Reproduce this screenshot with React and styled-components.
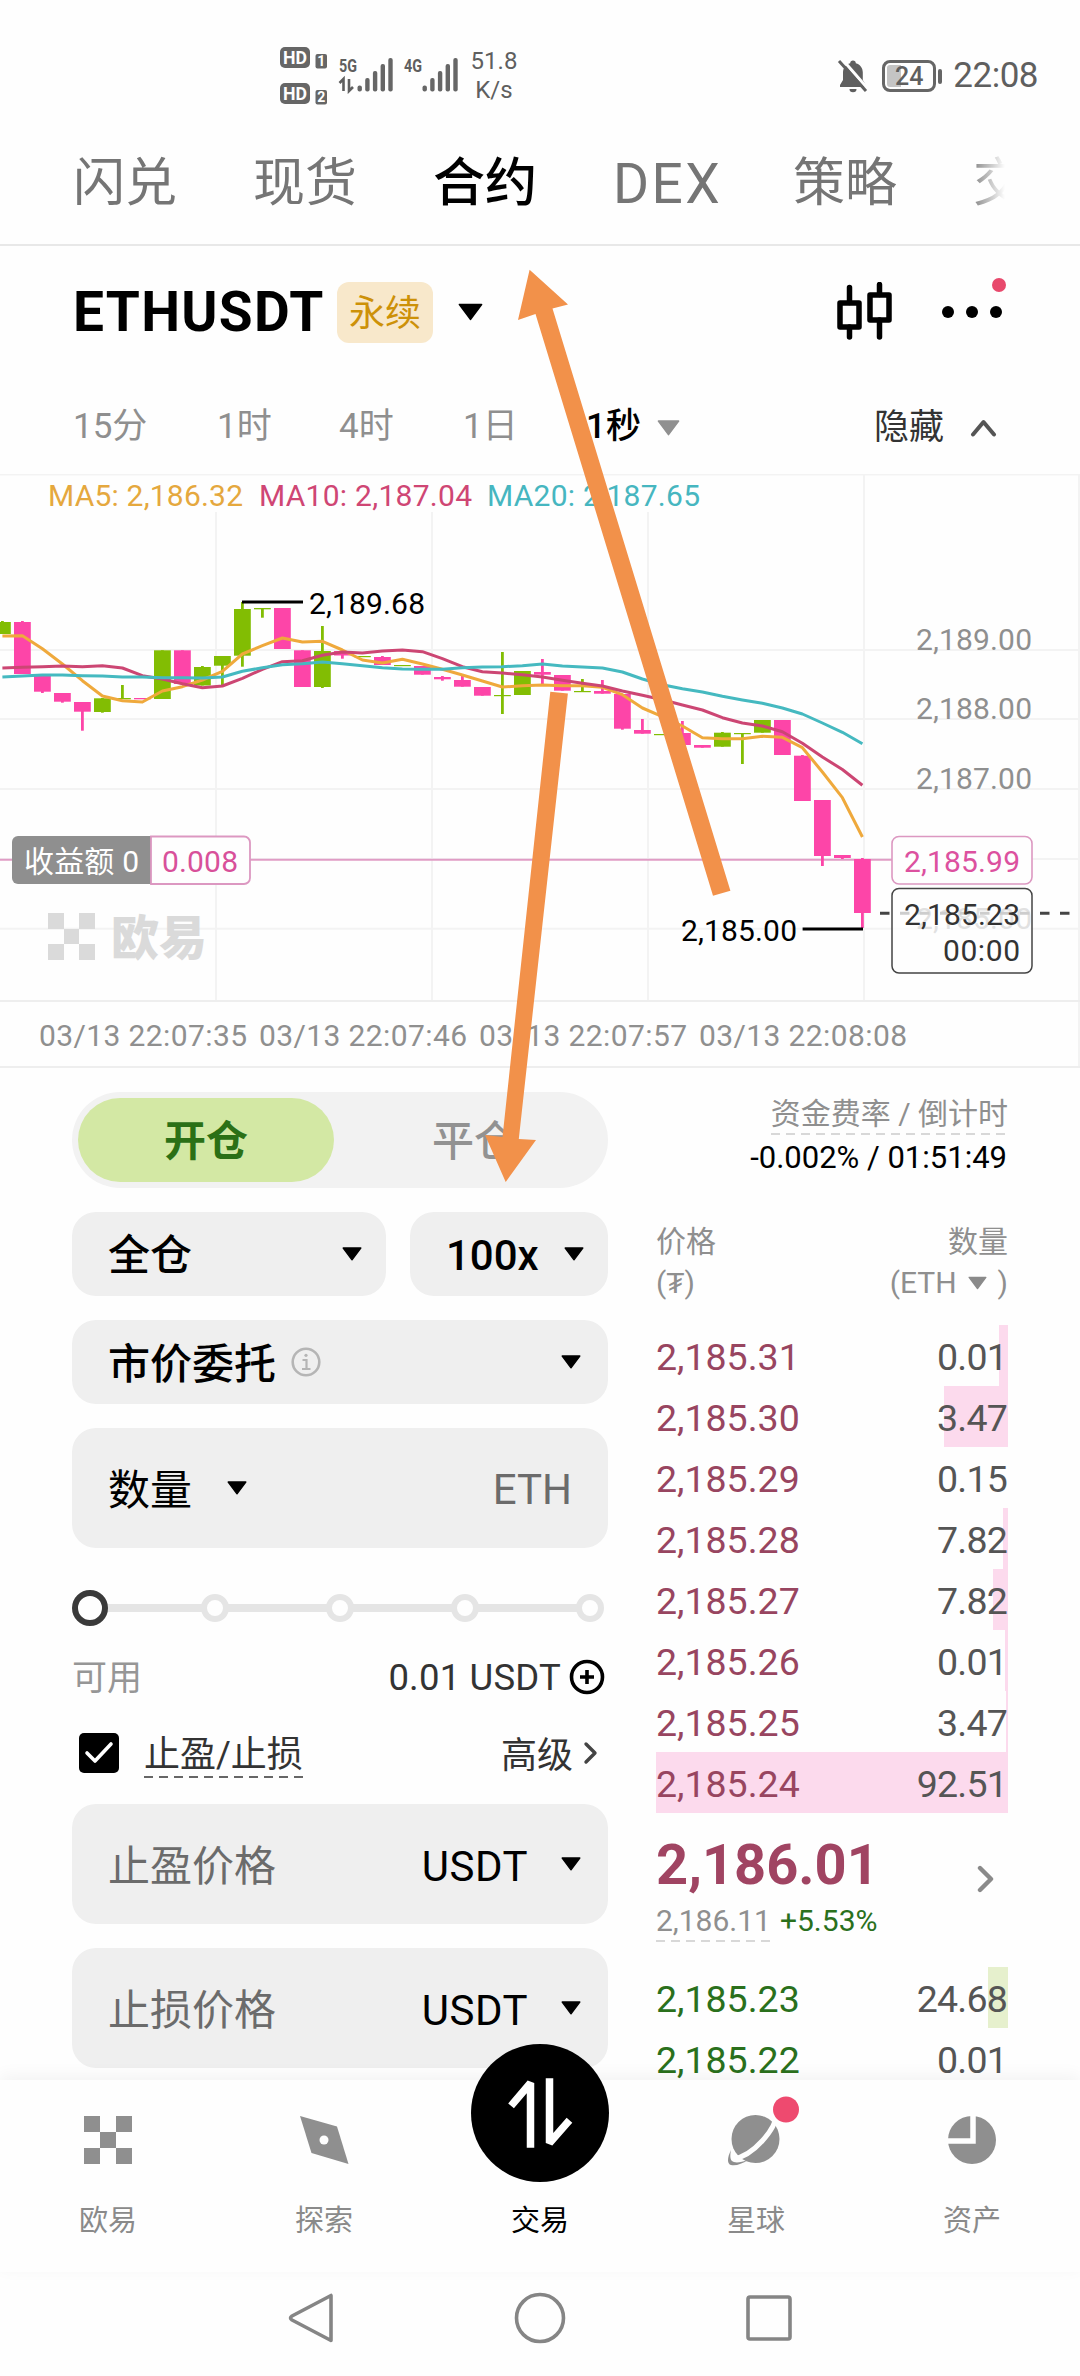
import React from "react";
import styled, { createGlobalStyle } from "styled-components";

const GREY = "#8f8f8f";
const PINK = "#fd45a8";
const LIME = "#82bd03";

const Global = createGlobalStyle`
  * { box-sizing: border-box; }
  body { margin: 0; background: #fefefe; }
`;

const Screen = styled.div`
  position: relative;
  display: flex;
  flex-direction: column;
  width: 1080px;
  height: 2376px;
  overflow: hidden;
  background: #fefefe;
  color: #000;
  font-family: Roboto, "Noto Sans CJK SC", sans-serif;
  svg { display: block; flex: none; }
`;

/* ---------- status bar ---------- */
const StatusBar = styled.div`
  display: flex;
  justify-content: space-between;
  height: 114px;
  padding: 46px 42px 0 279px;
  color: #5f5f5f;
`;
const StatusGroup = styled.div`
  display: flex;
  align-items: ${(p) => p.$align || "flex-start"};
  height: 60px;
`;
const Speed = styled.div`
  width: 60px;
  font-size: 24px;
  line-height: 29px;
  text-align: center;
  margin: 1px 0 0 5px;
`;
const Battery = styled.div`
  position: relative;
  width: 54px;
  height: 32px;
  margin: 0 17px 0 13px;
  border: 3px solid #666;
  border-radius: 8px;
  background: linear-gradient(90deg, #c4c4c4 0 16px, #fefefe 16px);
  box-shadow: inset 0 0 0 2px #fefefe;
  font-size: 25px;
  font-weight: 500;
  line-height: 27px;
  text-align: center;
  &::after {
    content: "";
    position: absolute;
    right: -9px;
    top: 6px;
    width: 4px;
    height: 15px;
    border-radius: 2px;
    background: #666;
  }
`;
const Clock = styled.div`
  font-size: 35px;
  line-height: 36px;
  letter-spacing: -0.5px;
`;

/* ---------- top tabs ---------- */
const Tabs = styled.div`
  display: flex;
  height: 132px;
  padding: 39px 72px 0 73px;
  border-bottom: 2px solid #e8e8e8;
`;
const TabTrack = styled.div`
  display: flex;
  gap: 76px;
  width: 935px;
  overflow: hidden;
  mask-image: linear-gradient(90deg, #000 895px, transparent 932px);
`;
const Tab = styled.div`
  flex: none;
  width: 104px;
  font-size: ${(p) => (p.$latin ? 55 : 52)}px;
  line-height: 62px;
  letter-spacing: ${(p) => (p.$latin ? 2.5 : 0)}px;
  white-space: nowrap;
  color: ${(p) => (p.$on ? "#000" : "#757575")};
  font-weight: ${(p) => (p.$on ? 500 : 400)};
`;

/* ---------- pair header ---------- */
const PairBar = styled.div`
  display: flex;
  justify-content: space-between;
  height: 136px;
  padding: 36px 72px 0 73px;
`;
const PairLeft = styled.div`
  display: flex;
  align-items: center;
  height: 60px;
`;
const Pair = styled.div`
  width: 264px;
  font-size: 55px;
  font-weight: 700;
  line-height: 60px;
  letter-spacing: 1.3px;
`;
const Badge = styled.div`
  width: 96px;
  height: 61px;
  margin-right: 25px;
  border-radius: 12px;
  background: #f8e8cb;
  color: #cd9108;
  font-size: 36px;
  line-height: 65px;
  text-align: center;
`;
const PairRight = styled.div`
  display: flex;
  gap: 46px;
  height: 60px;
`;

const Periods = styled.div`
  display: flex;
  align-items: flex-start;
  height: 92px;
  padding: 24px 83px 0 73px;
  font-size: 35px;
  line-height: 42px;
  color: ${GREY};
`;
const Period = styled.div`
  width: ${(p) => p.$w}px;
  color: ${(p) => (p.$on ? "#000" : GREY)};
  font-weight: ${(p) => (p.$on ? 500 : 400)};
`;
const PeriodMore = styled.div`
  display: flex;
  align-items: center;
  height: 44px;
`;
const HideToggle = styled.div`
  display: flex;
  align-items: center;
  gap: 26px;
  height: 44px;
  margin-left: auto;
  color: #333;
`;

/* ---------- trade body ---------- */
const Body = styled.div`
  display: flex;
  justify-content: space-between;
  height: 1012px;
  padding: 0 72px;
  overflow: hidden;
`;
const Form = styled.div`
  display: flex;
  flex-direction: column;
  gap: 24px;
  width: 536px;
  padding-top: 24px;
`;
const Segment = styled.div`
  display: flex;
  gap: 12px;
  height: 96px;
  padding: 6px;
  border-radius: 48px;
  background: #f2f2f2;
`;
const SegmentItem = styled.div`
  width: 256px;
  border-radius: 42px;
  font-size: 42px;
  line-height: 87px;
  text-align: center;
  font-weight: ${(p) => (p.$on ? 700 : 500)};
  color: ${(p) => (p.$on ? "#2b7016" : "#929292")};
  background: ${(p) => (p.$on ? "#d3e8a4" : "transparent")};
`;
const FieldRow = styled.div`
  display: flex;
  gap: 24px;
`;
const Field = styled.div`
  display: flex;
  align-items: center;
  flex: none;
  width: ${(p) => p.$w || 536}px;
  height: ${(p) => p.$h || 84}px;
  padding: 0 ${(p) => p.$pr || 27}px 0 36px;
  border-radius: 24px;
  background: #efefef;
  font-size: 42px;
  line-height: 50px;
`;
const FieldText = styled.span`
  margin-right: ${(p) => p.$mr || 0}px;
  padding-top: ${(p) => p.$pt || 0}px;
  color: ${(p) => p.$c || "#000"};
  font-weight: ${(p) => p.$weight || 400};
  letter-spacing: ${(p) => p.$ls || 0}px;
`;
const Push = styled.div`
  display: flex;
  align-items: center;
  margin-left: auto;
`;
const InfoRow = styled.div`
  display: flex;
  align-items: center;
  justify-content: space-between;
  height: ${(p) => p.$h}px;
  padding-top: ${(p) => p.$pt || 0}px;
  padding-right: ${(p) => p.$pr || 0}px;
  font-size: 36px;
  line-height: 44px;
  color: #333;
`;
const Muted = styled.span`
  padding-top: 3px;
  font-size: 35px;
  color: #969696;
`;
const Balance = styled.span`
  padding-top: 2px;
  font-size: 36.5px;
  letter-spacing: 0.2px;
`;
const Advanced = styled.span`
  padding-top: 5px;
`;
const Inline = styled.div`
  display: flex;
  align-items: center;
  gap: ${(p) => p.$gap}px;
  padding-left: ${(p) => p.$pl || 0}px;
`;
const Dashed = styled.div`
  padding-top: ${(p) => p.$pt || 0}px;
  padding-bottom: ${(p) => p.$pb || 0}px;
  background: repeating-linear-gradient(90deg, ${(p) => p.$c} 0 9px, transparent 9px 15px) left bottom / 100% 2px no-repeat;
`;
const FormStack = styled.div`
  display: flex;
  flex-direction: column;
`;

/* ---------- order book ---------- */
const Book = styled.div`
  display: flex;
  flex-direction: column;
  width: 352px;
  padding-top: 28px;
  font-size: 30px;
  line-height: 36px;
`;
const Funding = styled.div`
  display: flex;
  flex: none;
  flex-direction: column;
  align-items: flex-end;
  height: 125px;
  color: ${GREY};
`;
const FundingValue = styled.div`
  margin-top: 5px;
  padding-right: 1px;
  color: #000;
  font-size: 31px;
  line-height: 36px;
`;
const BookHead = styled.div`
  display: flex;
  flex: none;
  justify-content: space-between;
  height: 104px;
  color: ${GREY};
  line-height: 41px;
`;
const BookHeadCol = styled.div`
  display: flex;
  flex-direction: column;
  align-items: ${(p) => (p.$end ? "flex-end" : "flex-start")};
`;
const BookRow = styled.div`
  display: flex;
  flex: none;
  justify-content: space-between;
  height: 61px;
  padding: 0 1px 0 0;
  font-size: 37.5px;
  line-height: 65px;
  color: ${(p) => (p.$buy ? "#2a701c" : "#984560")};
  background: linear-gradient(${(p) => (p.$buy ? "#e6f0cd, #e6f0cd" : "#fcdaed, #fcdaed")}) right top / ${(p) => p.$bar}px 100% no-repeat;
`;
const Qty = styled.span`
  color: #555;
  letter-spacing: -0.8px;
`;
const Last = styled.div`
  display: flex;
  flex: none;
  align-items: flex-start;
  justify-content: space-between;
  height: 154px;
  padding-right: 13px;
`;
const LastPrice = styled.div`
  margin-top: 20px;
  font-size: 56px;
  font-weight: 700;
  line-height: 64px;
  color: #a04462;
`;
const LastSub = styled.div`
  display: flex;
  gap: 9px;
  margin-top: 3px;
  line-height: 42px;
  color: ${GREY};
`;
const Up = styled.span`
  color: #2a701c;
`;
const LastMore = styled.div`
  margin-top: 51px;
`;

/* ---------- bottom navigation ---------- */
const Nav = styled.div`
  position: relative;
  display: flex;
  height: 192px;
  background: #fefefe;
  box-shadow: 0 -4px 16px rgba(0, 0, 0, 0.05);
`;
const NavItem = styled.div`
  display: flex;
  flex-direction: column;
  align-items: center;
  justify-content: space-between;
  flex: 1;
  padding: ${(p) => (p.$on ? 0 : 28)}px 0 33px;
  margin-top: ${(p) => (p.$on ? -36 : 0)}px;
  font-size: 29px;
  line-height: 36px;
  color: ${(p) => (p.$on ? "#000" : "#8a8a8a")};
`;
const IconBox = styled.div`
  display: flex;
  align-items: center;
  justify-content: center;
  width: 64px;
  height: 64px;
`;
const SystemNav = styled.div`
  display: flex;
  justify-content: center;
  gap: 178px;
  height: 104px;
  padding-top: 20px;
  background: #fefefe;
`;
const Overlay = styled.svg`
  position: absolute;
  left: 0;
  top: 0;
  pointer-events: none;
`;

/* ---------- icons ---------- */
const Caret = ({ w = 20, h = 14, color = "#000" }) => (
  <svg width={w} height={h} viewBox="0 0 20 14">
    <path d="M1.2 1h17.6L10 12.8z" fill={color} stroke={color} strokeWidth="1.4" strokeLinejoin="round" />
  </svg>
);

const HdIcons = () => (
  <svg width="50" height="62" viewBox="0 0 50 62" fontFamily="Roboto" fontWeight="700">
    {[0, 36].map((y, i) => (
      <g key={y}>
        <rect x="1" y={y + 1} width="30" height="21" rx="5" fill="#666" />
        <text x="4" y={y + 18.2} fontSize="19" textLength="24" lengthAdjust="spacingAndGlyphs" fill="#fefefe">HD</text>
        <rect x="36.500" y={y + 8} width="11.500" height="14.500" rx="2" fill="#666" />
        <text x="38.300" y={y + 20.3} fontSize="14" fill="#fefefe">{i + 1}</text>
      </g>
    ))}
  </svg>
);

const Signal = ({ label, data }) => (
  <svg width="65" height="48" viewBox="0 0 65 48">
    <text x="10" y="26" fontFamily="Roboto" fontWeight="700" fontSize="18" textLength="18" lengthAdjust="spacingAndGlyphs" fill="#5f5f5f">{label}</text>
    {data && <path d="M10.500 37l4-4v12M24 41l-4 4v-12" fill="none" stroke="#5f5f5f" strokeWidth="2.600" />}
    {[39.5, 32, 25, 18, 12].map((y, i) => (
      <rect key={y} x={28.5 + i * 7.7} y={y} width="4.400" height={45.5 - y} rx="2" fill="#666" />
    ))}
  </svg>
);

const BellOff = () => (
  <svg width="32" height="34" viewBox="0 0 32 34">
    <path d="M16 1.500c1.700 0 2.800 1.100 2.800 2.700 4.500 1.200 7 4.800 7 9.300v7.500l3 5v2H3v-2l3-5v-7.500c0-4.500 2.600-8.100 7.200-9.300 0-1.600 1.100-2.700 2.800-2.700z" fill="#5f5f5f" />
    <path d="M12.500 30h7a3.500 3.200 0 0 1-7 0z" fill="#5f5f5f" />
    <path d="M5 0l26 30" stroke="#fefefe" strokeWidth="3" />
    <path d="M2 2l27 30" stroke="#5f5f5f" strokeWidth="3" />
  </svg>
);

const CandleIcon = () => (
  <svg width="58" height="60" viewBox="0 0 58 60" fill="none" stroke="#000" strokeWidth="5.500" strokeLinecap="round" strokeLinejoin="round">
    <rect x="4" y="21" width="19" height="24" />
    <path d="M13.500 5.500v15M13.500 45v10" />
    <rect x="34" y="13" width="19" height="25" />
    <path d="M43.500 2.500v10M43.500 38v17" />
  </svg>
);

const MoreIcon = () => (
  <svg width="68" height="60" viewBox="0 0 68 60" overflow="visible">
    <circle cx="8" cy="30" r="6" />
    <circle cx="32" cy="30" r="6" />
    <circle cx="56" cy="30" r="6" />
    <circle cx="59" cy="3" r="7" fill="#e8496c" />
  </svg>
);

const Chevron = ({ w, h, d, color, sw = 4 }) => (
  <svg width={w} height={h} viewBox={`0 0 ${w} ${h}`}>
    <path d={d} fill="none" stroke={color} strokeWidth={sw} strokeLinecap="round" strokeLinejoin="round" />
  </svg>
);

const InfoIcon = () => (
  <svg width="30" height="30" viewBox="0 0 30 30" fill="none" stroke="#b5b5b5" strokeWidth="2.600">
    <circle cx="15" cy="15" r="13.300" />
    <path d="M11.500 13h4v9M11 22h8.500" strokeWidth="2.200" />
    <circle cx="15" cy="8.300" r="1.600" fill="#b5b5b5" stroke="none" />
  </svg>
);

const PlusCircle = () => (
  <svg width="36" height="36" viewBox="0 0 36 36" fill="none" stroke="#000" strokeWidth="3.600">
    <circle cx="18" cy="18" r="15.500" />
    <path d="M18 11v14M11 18h14" />
  </svg>
);

const CheckBox = () => (
  <svg width="42" height="42" viewBox="0 0 42 42">
    <rect x="1" y="1" width="40" height="40" rx="5" />
    <path d="M9 21l8 8 16-17" fill="none" stroke="#fff" strokeWidth="3.600" strokeLinecap="round" strokeLinejoin="round" />
  </svg>
);

const Slider = () => (
  <svg width="536" height="40" viewBox="0 0 536 40">
    <path d="M18 20h500" stroke="#e5e5e5" strokeWidth="8" />
    {[143, 268, 393, 518].map((x) => (
      <circle key={x} cx={x} cy="20" r="11" fill="#fefefe" stroke="#e5e5e5" strokeWidth="6" />
    ))}
    <circle cx="18" cy="20" r="15" fill="#fefefe" stroke="#3a3a3a" strokeWidth="6" />
  </svg>
);

const CheckerLogo = () => (
  <svg width="48" height="48" viewBox="0 0 48 48" fill="#8f8f8f">
    <path d="M0 0h16v16H0zM32 0h16v16H32zM16 16h16v16H16zM0 32h16v16H0zM32 32h16v16H32z" />
  </svg>
);
const CompassIcon = () => (
  <svg width="50" height="50" viewBox="0 0 50 50">
    <path d="M1 1l37 10.500L49.500 49l-37-11z" fill="#8f8f8f" />
    <circle cx="25" cy="25" r="4.500" fill="#fefefe" />
  </svg>
);
const TradeIcon = () => (
  <svg width="138" height="138" viewBox="0 0 138 138">
    <circle cx="69" cy="69" r="69" />
    <path d="M42.500 59l17-20v61M96 79l-17.500 20V38" fill="none" stroke="#fff" strokeWidth="7.500" strokeLinejoin="bevel" strokeLinecap="square" />
  </svg>
);
const PlanetIcon = () => (
  <svg width="64" height="72" viewBox="0 0 64 72" overflow="visible">
    <circle cx="31.500" cy="35" r="24" fill="#8f8f8f" />
    <path d="M52 11C52 24 30 52 9 55" fill="none" stroke="#fefefe" strokeWidth="5" />
    <path d="M7 46c-4 8-4 14 0 15 5 1 11-1 17-5-8 3-14 3-16 1-2-2-2-6-1-11z" fill="#8f8f8f" />
    <circle cx="62" cy="5.500" r="13" fill="#ee4a6f" />
  </svg>
);
const PieIcon = () => (
  <svg width="50" height="50" viewBox="0 0 50 50">
    <circle cx="25" cy="25" r="24" fill="#8f8f8f" />
    <path d="M26 0v26H0" fill="none" stroke="#fefefe" strokeWidth="5.500" />
  </svg>
);

/* ---------- chart ---------- */
const STEP = 20;
const X0 = 2.4;
// [rising, bodyTop, bodyBottom, wickTop, wickBottom]
const candles = [
  [1, 622, 634, 621, 634], [0, 622, 674, 621, 674], [0, 676, 691.7, 676, 693], [0, 693, 701.7, 693, 702.7],
  [0, 702, 711.7, 702, 730.7], [1, 698.3, 712, 698, 712.7], [1, 698, 699.3, 685, 699], [0, 698, 699.3, 698, 699],
  [1, 650.3, 699, 650.3, 699], [0, 650.3, 684, 650.3, 685], [1, 667, 685.5, 666, 685.5], [1, 656, 665.7, 656, 687],
  [1, 609, 655.7, 602, 666.7], [1, 608, 609.3, 608, 617.7], [0, 608, 649, 608, 649], [0, 650.3, 687, 650.3, 687],
  [1, 651, 687, 626, 688], [0, 651, 655.5, 651, 658.7], [1, 656, 657.2, 656, 657], [0, 657, 665, 656, 665],
  [1, 665, 666.2, 665, 666], [0, 666, 674.7, 666, 674.7], [0, 677, 679.3, 676, 680.7], [0, 680, 686.7, 676, 686.7],
  [0, 687, 695.7, 687, 695.7], [1, 695, 696.2, 652, 714], [1, 671, 695, 671, 695], [0, 672, 674.7, 659, 684],
  [0, 675, 690.7, 675, 690.7], [1, 691, 692.2, 679, 692], [0, 691, 693.7, 680, 693.7], [0, 694, 728.7, 694, 729.7],
  [0, 730, 733.7, 719, 733.7], [1, 734, 735.2, 734, 735], [0, 733, 745, 721, 745], [0, 745, 747.7, 745, 747.7],
  [1, 732.7, 746.7, 732, 746.7], [1, 733, 734.2, 733, 764], [1, 720, 732.7, 720, 732.7], [0, 720, 755, 720, 755],
  [0, 755.7, 801, 755, 801], [0, 800, 856, 800, 866], [0, 855, 858, 855, 859], [0, 859, 913, 858, 928],
];
const ma5 = [636, 635.7, 648.7, 664, 680.7, 696, 700.7, 702, 691, 686.7, 680, 671.3, 654, 645.7, 638, 642, 641.3, 650, 660, 663, 659.3, 664, 669.3, 675, 681, 687, 685.7, 685, 685.7, 685.7, 687.3, 694.7, 708, 716.7, 726, 737.7, 738.7, 738.7, 736.3, 737.3, 747.7, 772, 797.7, 837];
const ma10 = [668, 667.3, 666.7, 666, 666.7, 665.7, 668, 675.7, 679, 683.7, 687.7, 686, 678.3, 669.3, 661.7, 660.7, 655.3, 652, 653, 651, 650, 651.7, 658.7, 666.7, 671.7, 673, 674.7, 677, 680.3, 683.3, 686, 691, 695.3, 699.7, 705, 710, 717.7, 723, 726, 731.7, 743.3, 757, 769.5, 785.3];
const ma20 = [677, 676, 675, 675, 675.7, 676, 677, 677, 677.7, 677.7, 678, 677, 671.3, 667.7, 664.7, 663.7, 662, 663.7, 665.7, 667.7, 669, 669.3, 669.3, 667.7, 667, 666.7, 665.7, 664, 666, 667, 668, 672, 679, 684.7, 688.7, 692, 696.3, 700, 703.3, 708, 714, 723, 732.3, 743.7];
const line = (ys) => ys.map((y, i) => `${X0 + i * STEP},${y}`).join(" ");

const T = ({ x, y, w, color = GREY, children }) => (
  <text x={x} y={y} textLength={w} fill={color}>{children}</text>
);

const Chart = () => (
  <svg width="1080" height="594" viewBox="0 474 1080 594" fontFamily='Roboto, "Noto Sans CJK SC", sans-serif' fontSize="30">
    <g stroke="#f3f3f3" strokeWidth="2">
      <path d="M0 474.500H1080M0 650H1080M0 719H1080M0 789H1080M0 859H1080M0 928.700H1080" />
      <path d="M216 512V1000M432 512V1000M648 512V1000M864 474V1000M1079 474V1067" />
      <path d="M0 1001H1080M0 1067H1080" stroke="#eeeeee" />
    </g>
    <g fill="#dadada">
      <path d="M48 913h16v16H48zM79 913h16v16H79zM64 929h15v15H64zM48 944h16v16H48zM79 944h16v16H79z" />
      <text x="111" y="955" fontSize="48" fontWeight="900" textLength="96">欧易</text>
    </g>
    <path d="M0 859.700H892" stroke="#e09cc5" strokeWidth="2" />
    {candles.map(([up, t, b, wt, wb], i) => {
      const c = up ? LIME : PINK;
      const cx = X0 + i * STEP;
      return (
        <g key={i} fill={c}>
          <rect x={cx - 1.4} y={wt} width="2.800" height={wb - wt} />
          <rect x={cx - 8.4} y={t} width="16.800" height={b - t} />
        </g>
      );
    })}
    <g fill="none" strokeWidth="3" strokeLinejoin="round">
      <polyline points={line(ma5)} stroke="#efa93c" />
      <polyline points={line(ma10)} stroke="#cc4673" />
      <polyline points={line(ma20)} stroke="#45b9c0" />
    </g>
    <T x={48} y={505.7} w={195} color="#e5a83e">MA5: 2,186.32</T>
    <T x={259} y={505.7} w={213} color="#cf4674">MA10: 2,187.04</T>
    <T x={487} y={505.7} w={213} color="#46b6c0">MA20: 2,187.65</T>
    <path d="M242 602H303M802.600 929H863" stroke="#000" strokeWidth="3" />
    <T x={309} y={613.7} w={116} color="#000">2,189.68</T>
    <T x={681} y={941} w={116} color="#000">2,185.00</T>
    <T x={916} y={650} w={116}>2,189.00</T>
    <T x={916} y={719} w={116}>2,188.00</T>
    <T x={916} y={789} w={116}>2,187.00</T>
    <T x={916} y={928.7} w={116}>2,185.00</T>
    <path d="M880 913.300H1080" stroke="#444" strokeWidth="3" strokeDasharray="9.500 10.500" />

    <path d="M151 836H18a6 6 0 0 0-6 6v36a6 6 0 0 0 6 6H151z" fill="#8f8f8f" />
    <path d="M151 836.500H244a6 6 0 0 1 6 6V878a6 6 0 0 1-6 6H151z" fill="#fefefe" stroke="#dc98c1" strokeWidth="1.800" />
    <T x={24} y={871.600} w={115} color="#fff">收益额 0</T>
    <T x={162} y={871.700} w={76} color="#d8509a">0.008</T>

    <rect x="892" y="836.500" width="140" height="47.500" rx="7" fill="#fefefe" stroke="#dc98c1" strokeWidth="1.600" />
    <T x={904} y={871.700} w={116} color="#dc519f">2,185.99</T>
    <rect x="892" y="888.500" width="140" height="84.500" rx="7" fill="#fefefe" fillOpacity="0.740" stroke="#444" strokeWidth="1.500" />
    <T x={904} y={925} w={116} color="#333">2,185.23</T>
    <T x={943} y={961} w={77} color="#333">00:00</T>

    <T x={39} y={1045.7} w={208}>03/13 22:07:35</T>
    <T x={259} y={1045.7} w={208}>03/13 22:07:46</T>
    <T x={479} y={1045.7} w={208}>03/13 22:07:57</T>
    <T x={699} y={1045.7} w={208}>03/13 22:08:08</T>
  </svg>
);

const asks = [
  ["2,185.31", "0.01", 9], ["2,185.30", "3.47", 64], ["2,185.29", "0.15", 0], ["2,185.28", "7.82", 5],
  ["2,185.27", "7.82", 15], ["2,185.26", "0.01", 3], ["2,185.25", "3.47", 2], ["2,185.24", "92.51", 352],
];
const bids = [["2,185.23", "24.68", 20], ["2,185.22", "0.01", 0]];

const Rows = ({ items, buy }) =>
  items.map(([price, qty, bar]) => (
    <BookRow key={price} $buy={buy} $bar={bar}>
      <span>{price}</span>
      <Qty>{qty}</Qty>
    </BookRow>
  ));

const PriceField = ({ label }) => (
  <Field $h={120}>
    <FieldText $c="#6b6b6b" $pt={5}>{label}</FieldText>
    <Push>
      <FieldText $mr={33} $pt={5} $ls={0.5}>USDT</FieldText>
      <Caret />
    </Push>
  </Field>
);

export default function App() {
  return (
    <Screen>
      <Global />
      <StatusBar>
        <StatusGroup>
          <HdIcons />
          <Signal label="5G" data />
          <Signal label="4G" />
          <Speed>51.8 K/s</Speed>
        </StatusGroup>
        <StatusGroup $align="center">
          <BellOff />
          <Battery>24</Battery>
          <Clock>22:08</Clock>
        </StatusGroup>
      </StatusBar>

      <Tabs>
        <TabTrack>
          <Tab>闪兑</Tab>
          <Tab>现货</Tab>
          <Tab $on>合约</Tab>
          <Tab $latin>DEX</Tab>
          <Tab>策略</Tab>
          <Tab>交</Tab>
        </TabTrack>
      </Tabs>

      <PairBar>
        <PairLeft>
          <Pair>ETHUSDT</Pair>
          <Badge>永续</Badge>
          <Caret w={25} h={18} />
        </PairLeft>
        <PairRight>
          <CandleIcon />
          <MoreIcon />
        </PairRight>
      </PairBar>

      <Periods>
        <Period $w={144}>15分</Period>
        <Period $w={122}>1时</Period>
        <Period $w={124}>4时</Period>
        <Period $w={123}>1日</Period>
        <Period $w={71} $on>1秒</Period>
        <PeriodMore>
          <Caret w={23} h={16} color="#909090" />
        </PeriodMore>
        <HideToggle>
          <span>隐藏</span>
          <Chevron w={27} h={18} d="M3 15.500L13.500 3 24 15.500" color="#555" />
        </HideToggle>
      </Periods>

      <Chart />

      <Body>
        <Form>
          <Segment>
            <SegmentItem $on>开仓</SegmentItem>
            <SegmentItem>平仓</SegmentItem>
          </Segment>
          <FieldRow>
            <Field $w={314} $pr={24}>
              <FieldText $weight={500} $pt={4}>全仓</FieldText>
              <Push><Caret /></Push>
            </Field>
            <Field $w={198} $pr={24}>
              <FieldText $weight={500} $pt={3}>100x</FieldText>
              <Push><Caret /></Push>
            </Field>
          </FieldRow>
          <Field>
            <FieldText $weight={500} $mr={15} $pt={5}>市价委托</FieldText>
            <InfoIcon />
            <Push><Caret /></Push>
          </Field>
          <Field $h={120} $pr={36}>
            <FieldText $mr={35} $pt={6}>数量</FieldText>
            <Caret />
            <Push><FieldText $c="#6b6b6b" $pt={4}>ETH</FieldText></Push>
          </Field>
          <FormStack>
            <InfoRow $h={72}><Slider /></InfoRow>
            <InfoRow $h={66} $pr={3}>
              <Muted>可用</Muted>
              <Inline $gap={8}>
                <Balance>0.01 USDT</Balance>
                <PlusCircle />
              </Inline>
            </InfoRow>
            <InfoRow $h={70} $pt={16} $pr={9}>
              <Inline $gap={24} $pl={6}>
                <CheckBox />
                <Dashed $c="#666" $pt={4} $pb={1}>止盈/止损</Dashed>
              </Inline>
              <Inline $gap={8}>
                <Advanced>高级</Advanced>
                <Chevron w={18} h={24} d="M5 3L14 12 5 21" color="#444" sw={3.4} />
              </Inline>
            </InfoRow>
          </FormStack>
          <PriceField label="止盈价格" />
          <PriceField label="止损价格" />
        </Form>

        <Book>
          <Funding>
            <Dashed $c="#d8d8d8" $pb={3}>资金费率 / 倒计时</Dashed>
            <FundingValue>-0.002% / 01:51:49</FundingValue>
          </Funding>
          <BookHead>
            <BookHeadCol>
              <span>价格</span>
              <span>(₮)</span>
            </BookHeadCol>
            <BookHeadCol $end>
              <span>数量</span>
              <Inline $gap={11}>(ETH <Caret w={19} h={14} color="#8a8a8a" />)</Inline>
            </BookHeadCol>
          </BookHead>
          <Rows items={asks} />
          <Last>
            <div>
              <LastPrice>2,186.01</LastPrice>
              <LastSub>
                <Dashed $c="#d8d8d8">2,186.11</Dashed>
                <Up>+5.53%</Up>
              </LastSub>
            </div>
            <LastMore>
              <Chevron w={18} h={30} d="M3 4L14 15 3 26" color="#8a8a8a" sw={4.4} />
            </LastMore>
          </Last>
          <Rows items={bids} buy />
        </Book>
      </Body>

      <Nav>
        <NavItem><IconBox><CheckerLogo /></IconBox>欧易</NavItem>
        <NavItem><IconBox><CompassIcon /></IconBox>探索</NavItem>
        <NavItem $on><TradeIcon />交易</NavItem>
        <NavItem><IconBox><PlanetIcon /></IconBox>星球</NavItem>
        <NavItem><IconBox><PieIcon /></IconBox>资产</NavItem>
      </Nav>

      <SystemNav>
        <svg width="50" height="52" viewBox="0 0 50 52" fill="none" stroke="#858585" strokeWidth="3.600" strokeLinejoin="round">
          <path d="M45 3.500v45L6 28q-3-2 0-4z" />
        </svg>
        <svg width="52" height="52" viewBox="0 0 52 52" fill="none" stroke="#858585" strokeWidth="3.600">
          <circle cx="26" cy="26" r="23.500" />
        </svg>
        <svg width="50" height="52" viewBox="0 0 50 52" fill="none" stroke="#858585" strokeWidth="3.600">
          <rect x="4" y="5" width="42" height="42" rx="2" />
        </svg>
      </SystemNav>

      <Overlay width="1080" height="1200" viewBox="0 0 1080 1200" fill="#f2914a">
        <path d="M529.600 269.700L568 304.500 552.500 308.500 730.400 890.700 713 895.700 535.500 314 518 320z" />
        <path d="M550.300 691.700L567.900 693.500 518.800 1139 536 1140 505.700 1182 485 1135 502.500 1137z" />
      </Overlay>
    </Screen>
  );
}
